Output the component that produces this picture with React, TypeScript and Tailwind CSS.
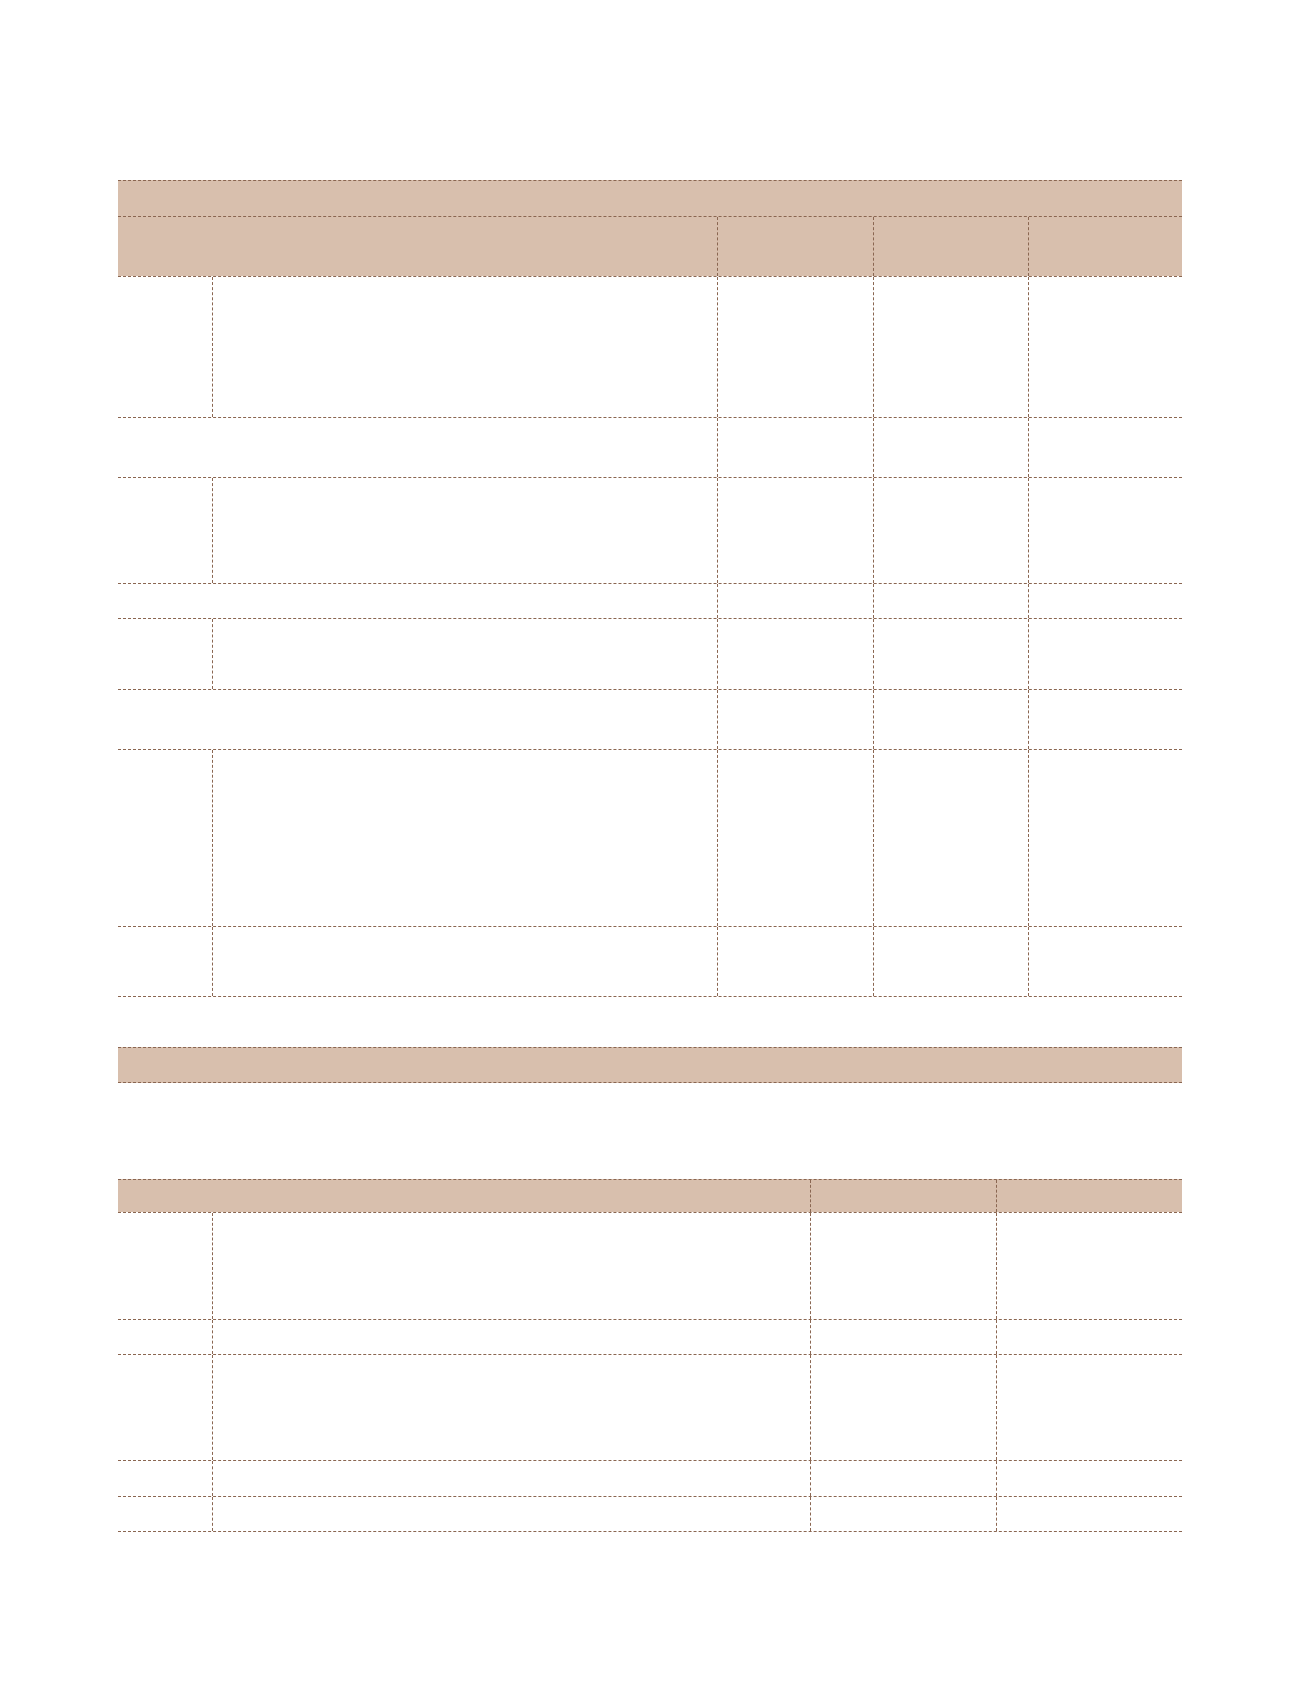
import React from "react";

const line = "border-[#8a6651] border-dashed";

type Row = { h: string; split: boolean };

const t1Rows: Row[] = [
  { h: "h-[141px]", split: true },
  { h: "h-[60px]", split: false },
  { h: "h-[106px]", split: true },
  { h: "h-[35px]", split: false },
  { h: "h-[71px]", split: true },
  { h: "h-[60px]", split: false },
  { h: "h-[177px]", split: true },
  { h: "h-[70px]", split: true },
];

const t3Rows: string[] = ["h-[107px]", "h-[35px]", "h-[106px]", "h-[36px]", "h-[35px]"];

export default function App() {
  return (
    <div className="w-[1299px] min-h-[1692px] bg-white pl-[118px] pt-[180px]" style={{ fontFamily: '"Liberation Sans", Arial, sans-serif' }}>
      <div className="w-[1064px]">
        {/* Table 1 */}
        <div className={`border-b ${line}`}>
          <div className={`h-[36px] border-t ${line} bg-[#d8bfad]`} />
          <div className={`h-[60px] border-t ${line} bg-[#d8bfad] grid grid-cols-[599px_156px_155px_154px]`}>
            <div />
            <div className={`border-l ${line}`} />
            <div className={`border-l ${line}`} />
            <div className={`border-l ${line}`} />
          </div>
          {t1Rows.map((r, i) =>
            r.split ? (
              <div key={i} className={`${r.h} border-t ${line} grid grid-cols-[94px_505px_156px_155px_154px]`}>
                <div />
                <div className={`border-l ${line}`} />
                <div className={`border-l ${line}`} />
                <div className={`border-l ${line}`} />
                <div className={`border-l ${line}`} />
              </div>
            ) : (
              <div key={i} className={`${r.h} border-t ${line} grid grid-cols-[599px_156px_155px_154px]`}>
                <div />
                <div className={`border-l ${line}`} />
                <div className={`border-l ${line}`} />
                <div className={`border-l ${line}`} />
              </div>
            )
          )}
        </div>

        {/* Band */}
        <div className={`mt-[50px] h-[36px] border-t border-b ${line} bg-[#d8bfad]`} />

        {/* Table 3 */}
        <div className={`mt-[96px] border-b ${line}`}>
          <div className={`h-[33px] border-t ${line} bg-[#d8bfad] grid grid-cols-[692px_186px_186px]`}>
            <div />
            <div className={`border-l ${line}`} />
            <div className={`border-l ${line}`} />
          </div>
          {t3Rows.map((h, i) => (
            <div key={i} className={`${h} border-t ${line} grid grid-cols-[94px_598px_186px_186px]`}>
              <div />
              <div className={`border-l ${line}`} />
              <div className={`border-l ${line}`} />
              <div className={`border-l ${line}`} />
            </div>
          ))}
        </div>
      </div>
    </div>
  );
}
